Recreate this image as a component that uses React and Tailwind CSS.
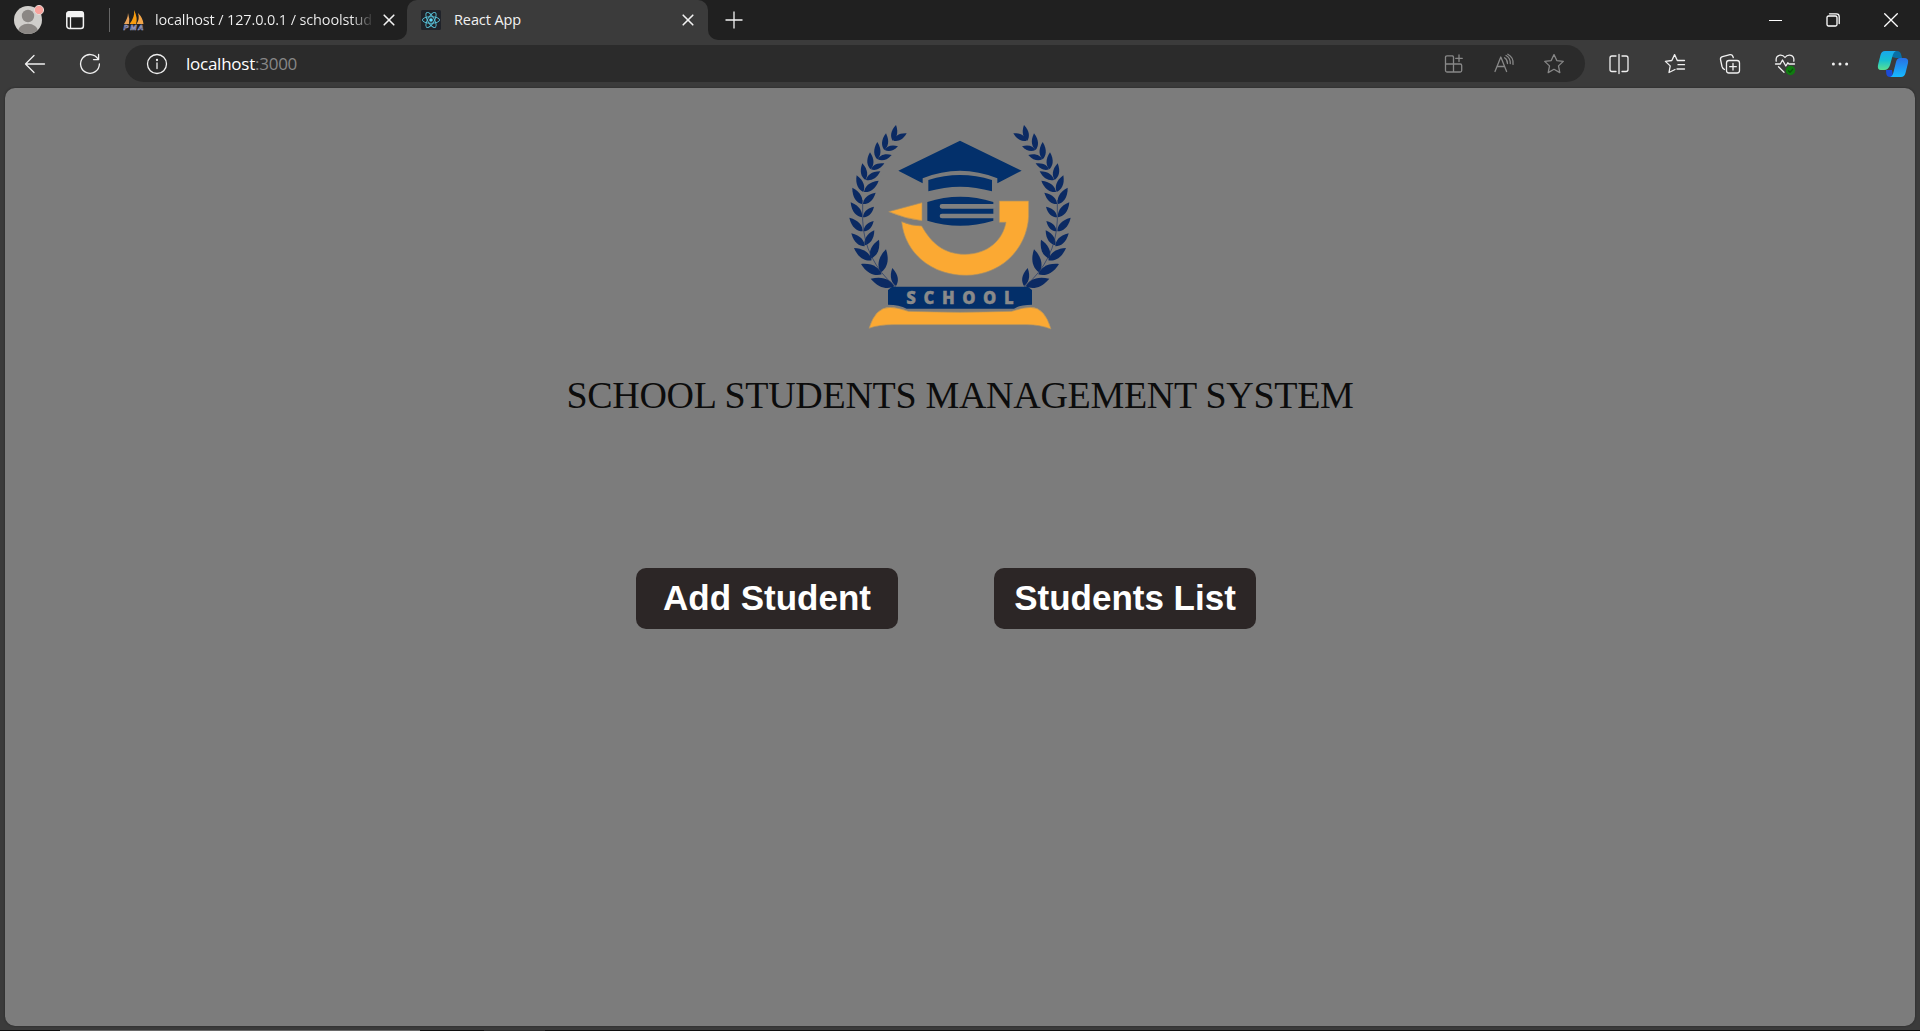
import React from "react";

const leaves = [
  [158, 62, 168, 15], [160, 62, 200, 40],
  [133, 90, 138, 40], [134, 90, 174, 79],
  [112, 118, 112, 66], [113, 118, 155, 105],
  [92, 148, 90, 97], [93, 148, 133, 130],
  [76, 180, 67, 130], [78, 180, 121, 154],
  [70, 216, 50, 166], [72, 216, 116, 182],
  [66, 252, 37, 203], [69, 252, 107, 218],
  [66, 292, 32, 247], [69, 292, 102, 260],
  [68, 334, 28, 293], [71, 334, 101, 303],
  [74, 379, 34, 340], [74, 376, 103, 331],
  [95, 421, 42, 384], [92, 416, 117, 359],
  [125, 463, 63, 432], [122, 457, 138, 388],
  [163, 499, 92, 476], [168, 498, 157, 444],
];

const leafPath = ([x1, y1, x2, y2]) => {
  const dx = x2 - x1;
  const dy = y2 - y1;
  const k = 0.2;
  const ax = x1 + dx * 0.55;
  const ay = y1 + dy * 0.55;
  const nx = -dy * k;
  const ny = dx * k;
  return `M${x1} ${y1}C${x1 + dx * 0.2 + nx} ${y1 + dy * 0.2 + ny} ${ax + nx * 1.4} ${ay + ny * 1.4} ${x2} ${y2}C${ax - nx * 1.4} ${ay - ny * 1.4} ${x1 + dx * 0.2 - nx} ${y1 + dy * 0.2 - ny} ${x1} ${y1}Z`;
};

function Laurel({ transform }) {
  return (
    <g transform={transform} fill="#0b2a63">
      {leaves.map((l, i) => (
        <path key={i} d={leafPath(l)} />
      ))}
      <path
        d="M68 240V300Q72 420 168 502"
        fill="none"
        stroke="#1d3566"
        strokeWidth="2"
      />
    </g>
  );
}

function SchoolLogo() {
  return (
    <svg viewBox="0 0 720 660" className="h-[220px] w-[240px] shrink-0">
      <Laurel />
      <Laurel transform="translate(720 0) scale(-1 1)" />
      <path
        d="M360 62L545 152L472 190V175Q360 130 248 175V190L175 152Z"
        fill="#03306b"
      />
      <path d="M265 180Q360 150 456 180V214Q360 186 265 214Z" fill="#03306b" />
      <path d="M262 246Q360 215 460 246V302Q360 332 262 302Z" fill="#03306b" />
      <path
        d="M460 259H306M460 288H306"
        stroke="#808080"
        strokeWidth="14"
        strokeLinecap="round"
      />
      <g fill="#fba933" stroke="#ab9165" strokeWidth="2">
        <path d="M146 275L246 248V302Q195 296 146 275Z" />
        <path d="M185 305Q215 318 245 318C275 370 310 402 375 403C445 402 488 360 498 307H478V243H566V290C560 390 480 466 378 466C275 466 195 400 185 305Z" />
        <path d="M87 625Q106 562 150 562Q175 563 205 574Q360 580 515 574Q545 563 572 562Q614 562 633 627Q600 614 560 614H160Q115 614 87 625Z" />
      </g>
      <path
        d="M156 500H564L576 510V554Q540 554 522 566H200Q178 554 144 554V510Z"
        fill="#032f69"
      />
      <text
        x="199"
        y="551"
        textLength="322"
        fontFamily="Open Sans, sans-serif"
        fontWeight="800"
        fontSize="50"
        fill="#8a8a8a"
        stroke="#8a8a8a"
        strokeWidth="1"
      >
        SCHOOL
      </text>
    </svg>
  );
}

function Icon({ children, className = "", size = 24 }) {
  return (
    <svg
      viewBox={`0 0 ${size} ${size}`}
      width={size}
      height={size}
      fill="none"
      stroke="currentColor"
      strokeWidth="1.3"
      strokeLinecap="round"
      strokeLinejoin="round"
      className={`shrink-0 ${className}`}
    >
      {children}
    </svg>
  );
}

const star =
  "M12 2.6L14.8 8.6L21.3 9.4L16.5 13.9L17.8 20.6L12 17.3L6.2 20.6L7.5 13.9L2.7 9.4L9.2 8.6Z";

function CloseIcon({ className = "" }) {
  return (
    <Icon size={12} className={className}>
      <path d="M1.2 1.2L10.8 10.8M10.8 1.2L1.2 10.8" strokeWidth="1.6" />
    </Icon>
  );
}

function TabBar() {
  return (
    <header className="flex h-10 items-center bg-[#202020] text-[#f2f2f2]">
      <svg viewBox="0 0 32 32" className="ml-3 size-8 shrink-0">
        <clipPath id="avatar">
          <circle cx="16" cy="16" r="14" />
        </clipPath>
        <circle cx="16" cy="16" r="14" fill="#d0cecb" />
        <g clipPath="url(#avatar)" fill="#8b8784">
          <circle cx="16" cy="12" r="6.2" />
          <ellipse cx="16" cy="27" rx="10" ry="7.2" />
        </g>
        <circle cx="27" cy="6" r="4.6" fill="#f9a19b" stroke="#e6d9d6" strokeWidth="1" />
      </svg>
      <Icon size={20} className="ml-[21px]">
        <rect x="1.8" y="1.8" width="16.6" height="16.6" rx="2.5" strokeWidth="1.5" />
        <path d="M2 3.5Q2 2 4 2H16Q18 2 18 3.5V6.5H2Z" fill="currentColor" />
        <path d="M5.5 6V18" />
      </Icon>
      <div className="ml-6 h-6 w-px bg-[#666]" />
      <svg viewBox="0 0 22 22" className="ml-[13px] size-[22px] shrink-0">
        <path d="M1 15Q5 9 5 4Q7 10 6 15Z" fill="#e9a35a" />
        <path d="M6.5 15Q12 8 11 1Q15 9 13 15Z" fill="#f89c0e" />
        <path d="M13.5 15Q17 10 15 4Q20 9 20.500 15Z" fill="#f2a549" />
        <text x="0.500" y="20.500" textLength="20" fontFamily="Liberation Sans" fontWeight="700" fontStyle="italic" fontSize="7.500" fill="#34396f" stroke="#a9add0" strokeWidth="0.500">
          PMA
        </text>
      </svg>
      <div className="ml-2.5 w-[218px] overflow-hidden whitespace-nowrap bg-linear-to-r from-[#f2f2f2] from-90% to-[#303030] bg-clip-text font-['Open_Sans',sans-serif] text-[14.5px] leading-5 tracking-[-0.13px] text-transparent">
        localhost / 127.0.0.1 / schoolstud
      </div>
      <CloseIcon className="ml-2.5" />
      <div className="flex h-full w-3 shrink-0 bg-[#3b3b3b]">
        <div className="h-full w-3 rounded-br-[10px] bg-[#202020]" />
      </div>
      <div className="flex h-full w-[301px] bg-[#202020]">
        <div className="flex h-full w-full items-center rounded-t-[10px] bg-[#3b3b3b]">
          <svg viewBox="0 0 20 20" className="ml-3.5 size-5 shrink-0">
            <rect width="20" height="20" rx="1.5" fill="#20232a" />
            <g fill="none" stroke="#58c4dc" strokeWidth="0.9">
              <ellipse cx="10" cy="10" rx="8.600" ry="3.300" />
              <ellipse cx="10" cy="10" rx="8.600" ry="3.300" transform="rotate(60 10 10)" />
              <ellipse cx="10" cy="10" rx="8.600" ry="3.300" transform="rotate(120 10 10)" />
            </g>
            <circle cx="10" cy="10" r="1.800" fill="#61dafb" />
          </svg>
          <div className="ml-[13px] grow font-['Open_Sans',sans-serif] text-[14.5px] leading-5 tracking-[-0.1px]">
            React App
          </div>
          <CloseIcon className="mr-3.5" />
        </div>
      </div>
      <div className="h-full w-2.5 bg-[#3b3b3b]">
        <div className="h-full w-2.5 rounded-bl-[10px] bg-[#202020]" />
      </div>
      <Icon size={18} className="ml-[7px]">
        <path d="M9 0.500V17.500M0.500 9H17.500" strokeLinecap="butt" />
      </Icon>
      <div className="ml-auto flex items-center gap-11 pr-[22px] text-white">
        <Icon size={13}>
          <path d="M0 6.500H13" strokeLinecap="butt" strokeWidth="1" />
        </Icon>
        <Icon size={14}>
          <rect x="1" y="3" width="10" height="10" rx="1.500" />
          <path d="M3.500 0.800H10.500Q13.200 0.800 13.200 3.500V10.500" />
        </Icon>
        <Icon size={14}>
          <path d="M0.700 0.700L13.300 13.300M13.300 0.700L0.700 13.300" />
        </Icon>
      </div>
    </header>
  );
}

function Toolbar() {
  return (
    <div className="flex h-12 items-start bg-[#3b3b3b] pt-[5px] text-[#efefef]">
      <div className="flex h-[37px] items-center">
        <Icon className="ml-[23px]">
          <path d="M21.500 12H2.500M11 3.500L2.500 12L11 20.500" />
        </Icon>
        <Icon className="ml-[31px]">
          <path d="M20.200 7.300A9.400 9.400 0 1 0 21.400 12" />
          <path d="M20.600 2.500V7.600H15.500" />
        </Icon>
      </div>
      <div className="ml-[23px] flex h-[37px] w-[1460px] items-center rounded-full bg-[#2b2b2b]">
        <Icon className="ml-5">
          <circle cx="12" cy="12" r="9.500" />
          <path d="M12 11V16.500" />
          <circle cx="12" cy="8" r="0.500" fill="currentColor" />
        </Icon>
        <div className="ml-[17px] grow font-['Open_Sans',sans-serif] text-[17px] leading-6 tracking-[-0.25px] text-white">
          localhost<span className="text-[#878787]">:3000</span>
        </div>
        <div className="flex items-center gap-[26px] pr-[19px] text-[#888]">
          <Icon>
            <path d="M10.800 3.800H5Q3.500 3.800 3.500 5.300V18.500Q3.500 20 5 20H18.200Q19.700 20 19.700 18.500V13.500Q19.700 12 18.200 12H3.500M11.500 20V5.300Q11.500 3.800 10 3.800M17 3V9.600M13.700 6.300H20.300" />
          </Icon>
          <Icon>
            <path d="M3 19.500L8.800 5L14.600 19.500M5 14.500H12.600M12.500 5.800Q15.500 7.500 15.500 11.500M14 3.500Q18.500 6 18.300 11.500M15.800 2.300Q21.800 5.500 21 12.300" />
          </Icon>
          <Icon>
            <path d={star} />
          </Icon>
        </div>
      </div>
      <div className="ml-[22px] flex h-[37px] grow items-center gap-[31px] text-[#f0f0f0]">
        <Icon>
          <path d="M9 4H5Q3 4 3 6V17.500Q3 19.500 5 19.500H9M15 4H19Q21 4 21 6V17.500Q21 19.500 19 19.500H15M12 2.500V21.500" />
        </Icon>
        <Icon className="ml-px">
          <path d="M12 17.500L6 20.500L7.200 13.900L2.400 9.400L8.800 8.500L11.600 2.600L14.300 8.500H21.500M15 12.700H21.500M14 17H21.500" />
        </Icon>
        <Icon>
          <rect x="8.500" y="8.500" width="13" height="12.500" rx="2.500" />
          <path d="M15 11.500V18M11.700 14.700H18.300M6.500 17.500Q4.500 16.500 4 14.500L2.500 7.500Q2.200 5.300 4.500 4.600L12 2.600Q14.500 2.300 15.300 5.500" />
        </Icon>
        <Icon>
          <path d="M3.200 9.200Q2.500 3.600 7.300 3.200Q10.300 3 12 5.500Q13.700 3 16.700 3.200Q21.500 3.600 20.800 9.200M2.500 12H7.300L9.500 8L12.800 14L14.800 10.800L16 12H21.500M5.500 14.800L11 20.300" />
          <circle cx="17.500" cy="18.500" r="4.700" fill="#107c10" stroke="none" />
          <path d="M15.500 18.700L17 20.200L19.700 17.300" stroke="#07540a" />
        </Icon>
        <Icon>
          <g fill="currentColor" stroke="none">
            <circle cx="5.400" cy="12" r="1.500" />
            <circle cx="12" cy="12" r="1.500" />
            <circle cx="18.600" cy="12" r="1.500" />
          </g>
        </Icon>
        <svg viewBox="0 0 32 28" className="-ml-1.5 h-7 w-8 shrink-0">
          <defs>
            <linearGradient id="cpLeft" x1="0" y1="0" x2="0" y2="1">
              <stop offset="0" stopColor="#18a8ee" />
              <stop offset="0.500" stopColor="#17c0d0" />
              <stop offset="1" stopColor="#5be190" />
            </linearGradient>
            <linearGradient id="cpRight" x1="0" y1="0" x2="0" y2="1">
              <stop offset="0" stopColor="#2870e5" />
              <stop offset="1" stopColor="#16baff" />
            </linearGradient>
          </defs>
          <path d="M15 1H20Q23 1 24 4L25 8H19L15 7Z" fill="#086fa5" />
          <path d="M9 20H15L16 27H13Q10 27 9.300 24Z" fill="#1c4bd6" />
          <path d="M8 1H19Q16.500 2 15.500 6L13 15Q11.500 20 7 20H4Q0 20 1 15L3.500 5Q4.500 1 8 1Z" fill="url(#cpLeft)" />
          <path d="M23 8H27Q32 8 31 13L28.500 23Q27.500 27 24 27H13Q15.500 26.500 16.500 22L19 12Q20 8 23 8Z" fill="url(#cpRight)" />
        </svg>
      </div>
    </div>
  );
}

function MenuButton({ children }) {
  return (
    <button className="h-[61px] w-[262px] rounded-[10px] bg-[#2c2626] pb-0.5 text-center font-['Liberation_Sans',Arial,sans-serif] text-[35px] leading-none font-bold whitespace-nowrap text-white">
      {children}
    </button>
  );
}

export default function App() {
  return (
    <div className="flex h-[1031px] w-[1920px] flex-col overflow-hidden bg-[#3b3b3b]">
      <TabBar />
      <Toolbar />
      <main className="mx-[5px] flex h-[938px] flex-col items-center rounded-[10px] bg-[#7c7c7c] pt-8 shadow-[0_0_2px_#222]">
        <SchoolLogo />
        <h1 className="mt-8 font-['Liberation_Serif','Times_New_Roman',serif] text-[38px] leading-[46px] tracking-[-0.3px] whitespace-nowrap text-[#0c0c0c]">
          SCHOOL STUDENTS MANAGEMENT SYSTEM
        </h1>
        <div className="mt-[150px] mr-7 flex gap-24">
          <MenuButton>Add Student</MenuButton>
          <MenuButton>Students List</MenuButton>
        </div>
      </main>
      <div className="mt-auto flex h-px bg-[#101010]">
        <div className="ml-[60px] w-[360px] bg-[#6a6a6a]" />
        <div className="ml-16 w-[61px] bg-[#2c2c2c]" />
      </div>
    </div>
  );
}
